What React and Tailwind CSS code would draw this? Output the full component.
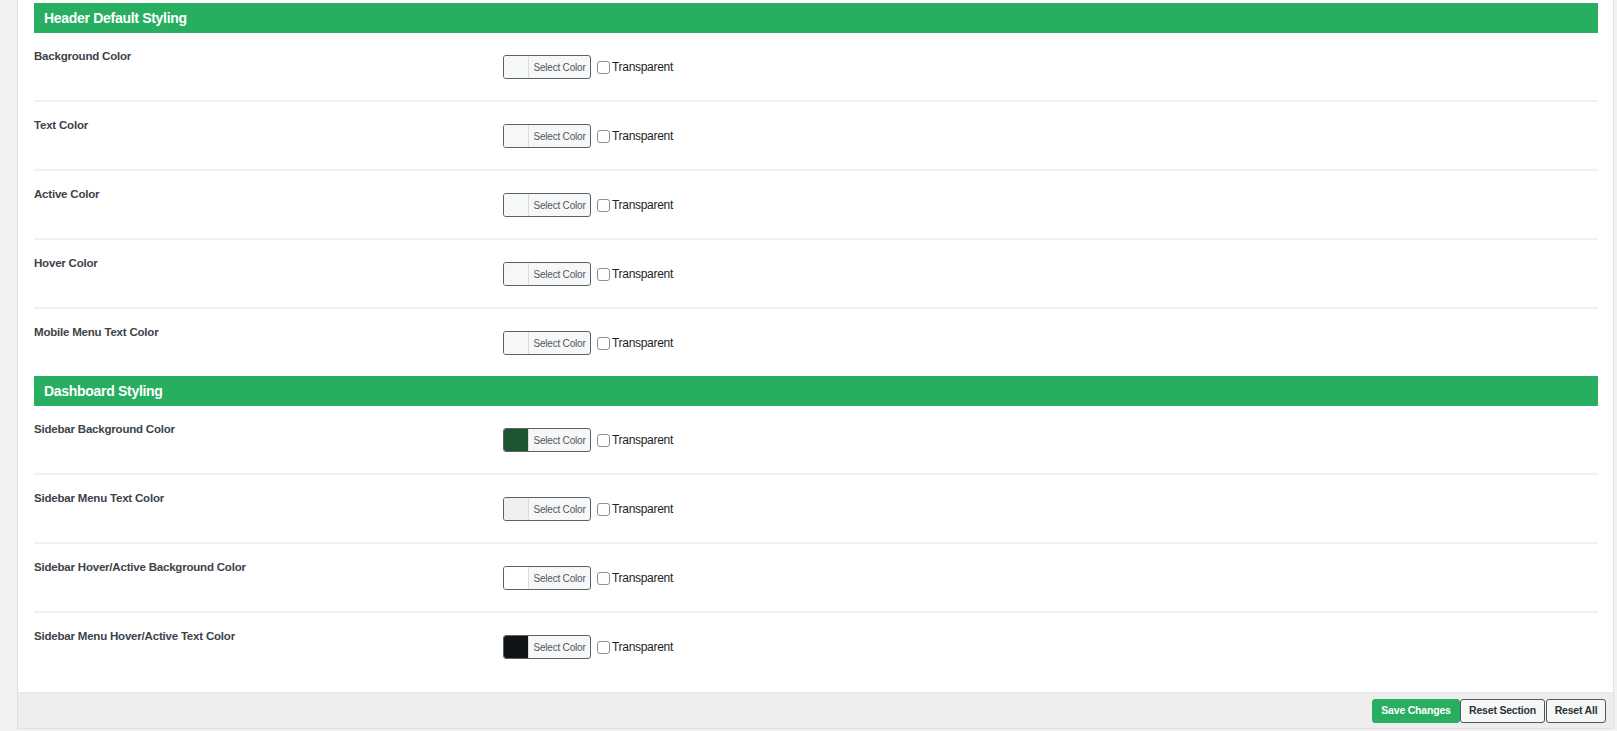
import React from 'react';

const headerRows = [
  { label: 'Background Color', swatch: 'bg-[#f6f7f7]' },
  { label: 'Text Color', swatch: 'bg-[#f6f7f7]' },
  { label: 'Active Color', swatch: 'bg-[#f6f7f7]' },
  { label: 'Hover Color', swatch: 'bg-[#f6f7f7]' },
  { label: 'Mobile Menu Text Color', swatch: 'bg-[#f6f7f7]' },
];

const dashboardRows = [
  { label: 'Sidebar Background Color', swatch: 'bg-[#1b5631]' },
  { label: 'Sidebar Menu Text Color', swatch: 'bg-[#f0f0f0]' },
  { label: 'Sidebar Hover/Active Background Color', swatch: 'bg-white' },
  { label: 'Sidebar Menu Hover/Active Text Color', swatch: 'bg-[#111417]' },
];

function SectionTitle({ children }) {
  return (
    <div className="flex h-[30px] items-center bg-[#27ae60] pl-[10px] text-[14px] font-bold tracking-[-0.3px] text-white">
      {children}
    </div>
  );
}

function ColorPicker({ swatch }) {
  return (
    <div className="flex items-center">
      <button
        type="button"
        className="flex h-[24px] w-[88px] overflow-hidden rounded-[3px] border border-[#5c6166] bg-[#f6f7f7]"
      >
        <span className={`h-full w-[25px] border-r border-[#dcdcde] ${swatch}`} />
        <span className="flex flex-1 items-center justify-center text-[10px] tracking-[-0.2px] text-[#50575e]">
          Select Color
        </span>
      </button>
      <label className="ml-[6px] flex items-center text-[12px] tracking-[-0.3px] text-[#1d2327]">
        <span className="h-[13px] w-[13px] rounded-[3px] border border-[#8c8f94] bg-white" />
        <span className="ml-[2px]">Transparent</span>
      </label>
    </div>
  );
}

function Row({ label, swatch, height, last }) {
  return (
    <div className={`flex items-start ${height} ${last ? '' : 'border-b-2 border-[#f1f1f1]'}`}>
      <div className="w-[469px] pt-[15px] text-[11.5px] font-bold leading-[16px] tracking-[-0.2px] text-[#3c434a]">
        {label}
      </div>
      <div className="pt-[22px]">
        <ColorPicker swatch={swatch} />
      </div>
    </div>
  );
}

export default function App() {
  return (
    <div
      className="flex h-[731px] w-full bg-[#f1f1f1]"
      style={{ fontFamily: '"Liberation Sans", Arial, sans-serif' }}
    >
      <div className="w-[17px] shrink-0" />
      <div className="flex h-[729px] flex-1 flex-col border-x border-b border-[#e0e0e0] bg-white">
        <div className="flex-1 pl-[16px] pr-[15px] pt-[3px]">
          <SectionTitle>Header Default Styling</SectionTitle>
          {headerRows.map((r, i) => {
            const last = i === headerRows.length - 1;
            return (
              <Row
                key={r.label}
                label={r.label}
                swatch={r.swatch}
                height={last ? 'h-[67px]' : 'h-[69px]'}
                last={last}
              />
            );
          })}
          <SectionTitle>Dashboard Styling</SectionTitle>
          {dashboardRows.map((r, i) => {
            const last = i === dashboardRows.length - 1;
            return (
              <Row
                key={r.label}
                label={r.label}
                swatch={r.swatch}
                height={last ? 'h-[79px]' : 'h-[69px]'}
                last={last}
              />
            );
          })}
        </div>
        <div className="flex h-[36px] items-center justify-end gap-[1px] border-t border-[#e6e6e6] bg-[#ededed] pr-[7px]">
          <button
            type="button"
            className="h-[24px] w-[88px] rounded-[3px] border border-[#27ae60] bg-[#27ae60] text-[10.5px] font-bold tracking-[-0.2px] text-white"
          >
            Save Changes
          </button>
          <button
            type="button"
            className="-ml-[1px] h-[24px] w-[85px] rounded-[3px] border border-[#50575e] bg-[#f6f7f7] text-[10.5px] font-bold tracking-[-0.2px] text-[#2c3338]"
          >
            Reset Section
          </button>
          <button
            type="button"
            className="h-[24px] w-[60px] rounded-[3px] border border-[#50575e] bg-[#f6f7f7] text-[10.5px] font-bold tracking-[-0.2px] text-[#2c3338]"
          >
            Reset All
          </button>
        </div>
      </div>
      <div className="w-[3px] shrink-0" />
    </div>
  );
}
